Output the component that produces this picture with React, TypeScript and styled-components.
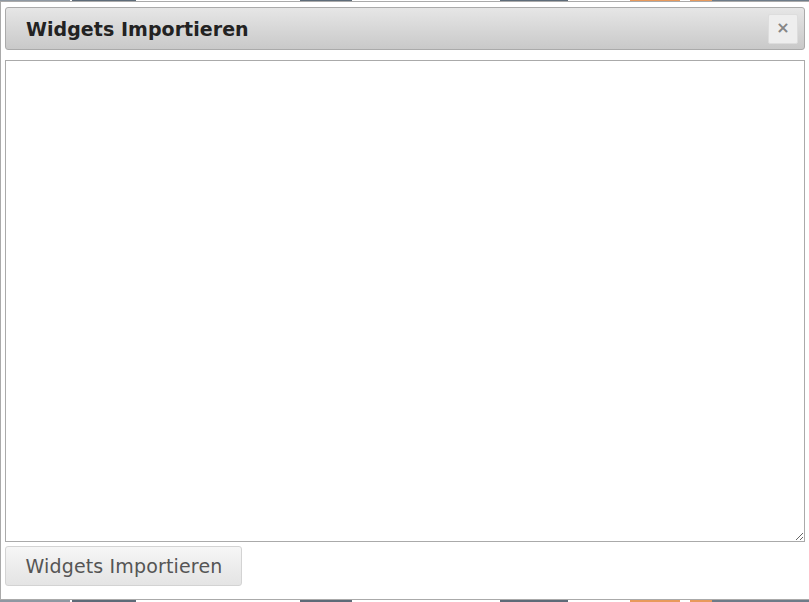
import React from 'react'
import styled, { createGlobalStyle } from 'styled-components'

const GlobalStyle = createGlobalStyle`
  html, body {
    margin: 0;
    padding: 0;
    background: #ffffff;
    font-family: "DejaVu Sans", Verdana, sans-serif;
  }
`

const Page = styled.div`
  width: 809px;
  height: 602px;
  overflow: hidden;
  display: flex;
  flex-direction: column;
`

const Backdrop = styled.div<{ $h: number }>`
  height: ${({ $h }) => $h}px;
  flex: none;
  background: linear-gradient(
    to right,
    #8e98a2 0 70px,
    #ffffff 70px 72px,
    #5d6b78 72px 136px,
    #ffffff 136px 300px,
    #5d6b78 300px 352px,
    #ffffff 352px 500px,
    #5d6b78 500px 568px,
    #ffffff 568px 630px,
    #e89a5c 630px 680px,
    #ffffff 680px 690px,
    #e89a5c 690px 712px,
    #6d7b88 712px 809px
  );
`

const Dialog = styled.div`
  flex: 1;
  border: 1px solid #aaaaaa;
  border-right: none;
  background: #ffffff;
  padding: 5px 4px 0 4px;
  display: flex;
  flex-direction: column;
  min-height: 0;
`

const TitleBar = styled.div`
  height: 41px;
  flex: none;
  border: 1px solid #aaaaaa;
  border-radius: 3px;
  background: linear-gradient(to bottom, #e6e6e6 0%, #d6d6d6 55%, #c9c9c9 100%);
  display: flex;
  align-items: center;
  justify-content: space-between;
  padding: 0 6px 0 20px;
`

const Title = styled.span`
  font-family: "DejaVu Sans", Verdana, sans-serif;
  font-weight: bold;
  font-size: 19px;
  color: #222222;
  letter-spacing: 0.05px;
`

const CloseButton = styled.button`
  width: 30px;
  height: 30px;
  padding: 0 0 1px 0;
  border: 1px solid #dddddd;
  border-radius: 2px;
  background: #eeeeee;
  color: #858585;
  font-family: "DejaVu Sans", sans-serif;
  font-weight: bold;
  font-size: 16px;
  line-height: 1;
  display: flex;
  align-items: center;
  justify-content: center;
  cursor: pointer;
`

const Editor = styled.textarea`
  margin-top: 10px;
  height: 482px;
  flex: none;
  border: 1px solid #aaaaaa;
  padding: 2px;
  box-sizing: border-box;
  width: 100%;
  font-family: "DejaVu Sans Mono", monospace;
  font-size: 13px;
  outline: none;
  resize: both;
`

const ImportButton = styled.button`
  margin-top: 4px;
  align-self: flex-start;
  width: 237px;
  height: 40px;
  border: 1px solid #d3d3d3;
  border-radius: 3px;
  background: linear-gradient(to bottom, #f6f6f6 0%, #ebebeb 60%, #e4e4e4 100%);
  color: #555555;
  font-family: "DejaVu Sans", Verdana, sans-serif;
  font-size: 19px;
  letter-spacing: 0.15px;
  padding: 0 0 0 1px;
  cursor: pointer;
`

export default function App() {
  return (
    <>
      <GlobalStyle />
      <Page>
        <Backdrop $h={1} />
        <Dialog>
          <TitleBar>
            <Title>Widgets Importieren</Title>
            <CloseButton aria-label="close">×</CloseButton>
          </TitleBar>
          <Editor autoFocus spellCheck={false} />
          <ImportButton>Widgets Importieren</ImportButton>
        </Dialog>
        <Backdrop $h={2} />
      </Page>
    </>
  )
}
